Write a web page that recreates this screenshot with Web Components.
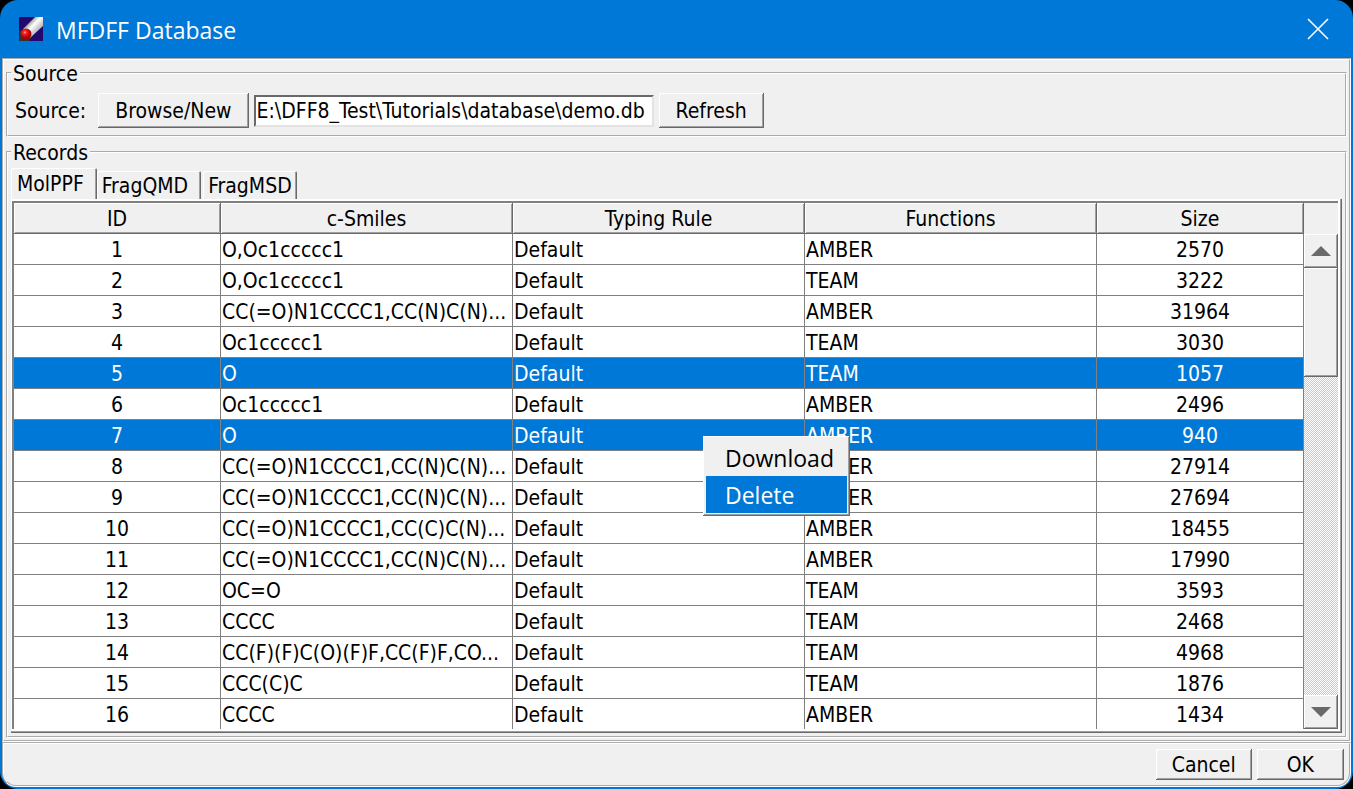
<!DOCTYPE html>
<html lang="en">
<head>
<meta charset="utf-8">
<title>MFDFF Database</title>
<style>
  body {
    margin: 0;
    background: #000;
    color: #000;
    font: 21px/26px "DejaVu Sans Condensed", "Noto Sans", sans-serif;
    --face: #f0f0f0;
    --accent: #0078d7;
    --line: #808080;
    --raised: inset -1px -1px #696969, inset 1px 1px #fff, inset -2px -2px #a0a0a0;
  }
</style>
</head>
<body>
<database-window heading="MFDFF Database">
  <group-box label="Source"><source-bar path="E:\DFF8_Test\Tutorials\database\demo.db"></source-bar></group-box>
  <group-box label="Records" class="grow">
    <tab-pane tabs="MolPPF,FragQMD,FragMSD"><records-table></records-table></tab-pane>
  </group-box>
  <bevel-button slot="footer" style="--pad: 16px">Cancel</bevel-button>
  <bevel-button slot="footer" style="--pad: 30px">OK</bevel-button>
</database-window>
<context-menu></context-menu>

<script>
class DatabaseWindow extends HTMLElement {
  constructor() {
    super();
    this.attachShadow({ mode: 'open' });
    this.shadowRoot.innerHTML = `
      <style>
        :host {
          display: flex;
          flex-direction: column;
          box-sizing: border-box;
          min-height: 100vh;
          padding: 0 2px 2px;
          background: var(--accent);
          border-radius: 18px;
          overflow: hidden;
        }
        header {
          display: flex;
          align-items: center;
          height: 58px;
          padding: 0 20px 0 17px;
          color: #fff;
        }
        h1 {
          flex: 1;
          margin: 0 0 0 13px;
          font: 23px/32px "Open Sans", sans-serif;
          padding-top: 2px;
        }
        header button {
          display: flex;
          padding: 0;
          border: 0;
          background: none;
        }
        main, footer {
          display: flex;
          border: 2px groove #fff;
          background: var(--face);
        }
        main {
          flex: 1;
          flex-direction: column;
          gap: 2px;
          padding: 0 2px 2px;
        }
        footer {
          justify-content: flex-end;
          gap: 5px;
          padding: 5px;
          border-radius: 0 0 14px 14px;
        }
      </style>
      <header>
        <svg width="24" height="24" viewBox="0 0 24 24" aria-hidden="true">
          <defs>
            <linearGradient id="rod" x1="0" y1="0" x2="1" y2="1">
              <stop offset="0.25" stop-color="#888"/>
              <stop offset="0.45" stop-color="#fff"/>
              <stop offset="0.75" stop-color="#aaa"/>
            </linearGradient>
            <radialGradient id="ball" cx="0.4" cy="0.35">
              <stop offset="0" stop-color="#fbb"/>
              <stop offset="0.3" stop-color="#f22"/>
              <stop offset="1" stop-color="#a00"/>
            </radialGradient>
          </defs>
          <path fill="#24086e" d="M0 0h24v24H0z"/>
          <path fill="#333" d="M0 14l6-2 7 7-3 5H0z"/>
          <path fill="url(#rod)" d="M4 12L16 0h8v9L11 21z"/>
          <circle cx="7" cy="17" r="5.5" fill="url(#ball)"/>
        </svg>
        <h1></h1>
        <button aria-label="Close">
          <svg width="26" height="26" viewBox="0 0 26 26">
            <path d="M3 3L23 23M23 3L3 23" stroke="#fff" stroke-width="1.6" fill="none"/>
          </svg>
        </button>
      </header>
      <main><slot></slot></main>
      <footer><slot name="footer"></slot></footer>
    `;
    this.shadowRoot.querySelector('h1').textContent = this.getAttribute('heading');
  }
}

class GroupBox extends HTMLElement {
  constructor() {
    super();
    this.attachShadow({ mode: 'open' });
    this.shadowRoot.innerHTML = `
      <style>
        :host { display: block; }
        :host(.grow) {
          display: flex;
          flex: 1;
        }
        fieldset {
          flex: 1;
          min-width: 0;
          margin: 0;
          padding: 0 3px;
          border: 2px groove #fff;
        }
        legend {
          padding: 2px 2px 0;
          line-height: 24px;
        }
      </style>
      <fieldset><legend></legend><slot></slot></fieldset>
    `;
    this.shadowRoot.querySelector('legend').textContent = this.getAttribute('label');
  }
}

class BevelButton extends HTMLElement {
  constructor() {
    super();
    this.attachShadow({ mode: 'open' });
    this.shadowRoot.innerHTML = `
      <style>
        :host { display: block; }
        button {
          display: block;
          height: var(--height, 31px);
          padding: 0 var(--pad, 17px);
          border: 0;
          background: var(--face);
          box-shadow: var(--raised);
          color: inherit;
          font: inherit;
        }
      </style>
      <button><slot></slot></button>
    `;
  }
}

class SourceBar extends HTMLElement {
  constructor() {
    super();
    this.attachShadow({ mode: 'open' });
    this.shadowRoot.innerHTML = `
      <style>
        :host {
          display: flex;
          align-items: center;
          gap: 5px;
          padding: 7px 4px;
          --height: 35px;
        }
        label { margin-right: 7px; }
        input {
          box-sizing: border-box;
          width: 400px;
          height: 32px;
          padding: 0 1px;
          border: 2px solid;
          border-color: #696969 #e3e3e3 #e3e3e3 #696969;
          background: #fff;
          color: inherit;
          font: inherit;
        }
      </style>
      <label for="path">Source:</label>
      <bevel-button>Browse/New</bevel-button>
      <input id="path" type="text">
      <bevel-button>Refresh</bevel-button>
    `;
    this.shadowRoot.querySelector('input').value = this.getAttribute('path');
  }
}

class TabPane extends HTMLElement {
  constructor() {
    super();
    this.attachShadow({ mode: 'open' });
    this.shadowRoot.innerHTML = `
      <style>
        :host {
          display: block;
          padding: 3px 0 2px;
        }
        nav {
          display: flex;
          align-items: flex-end;
          gap: 2px;
        }
        button {
          height: 28px;
          padding: 2px 5px 0;
          border: 0;
          border-radius: 2px 2px 0 0;
          background: var(--face);
          box-shadow: inset 1px 1px #fff, inset -1px 0 #696969, inset -2px 0 #a0a0a0;
          color: inherit;
          font: inherit;
        }
        button:not(:last-child) { padding-right: 13px; }
        button[aria-selected="true"] {
          height: 31px;
          padding: 0 13px 0 6px;
          margin-right: -2px;
        }
        .pane {
          padding: 2px 4px 4px 1px;
          background: #fff;
          box-shadow: inset -1px -1px #696969, inset -2px -2px #a0a0a0;
        }
        .well {
          border: solid #808080;
          border-width: 2px 0 0 2px;
        }
      </style>
      <nav role="tablist"></nav>
      <div class="pane"><div class="well"><slot></slot></div></div>
    `;
    const nav = this.shadowRoot.querySelector('nav');
    this.getAttribute('tabs').split(',').forEach((name, i) => {
      const tab = document.createElement('button');
      tab.setAttribute('role', 'tab');
      tab.setAttribute('aria-selected', i === 0);
      tab.textContent = name;
      nav.append(tab);
    });
  }
}

const RECORDS = [
  ['O,Oc1ccccc1', 'AMBER', 2570],
  ['O,Oc1ccccc1', 'TEAM', 3222],
  ['CC(=O)N1CCCC1,CC(N)C(N)...', 'AMBER', 31964],
  ['Oc1ccccc1', 'TEAM', 3030],
  ['O', 'TEAM', 1057],
  ['Oc1ccccc1', 'AMBER', 2496],
  ['O', 'AMBER', 940],
  ['CC(=O)N1CCCC1,CC(N)C(N)...', 'AMBER', 27914],
  ['CC(=O)N1CCCC1,CC(N)C(N)...', 'AMBER', 27694],
  ['CC(=O)N1CCCC1,CC(C)C(N)...', 'AMBER', 18455],
  ['CC(=O)N1CCCC1,CC(N)C(N)...', 'AMBER', 17990],
  ['OC=O', 'TEAM', 3593],
  ['CCCC', 'TEAM', 2468],
  ['CC(F)(F)C(O)(F)F,CC(F)F,CO...', 'TEAM', 4968],
  ['CCC(C)C', 'TEAM', 1876],
  ['CCCC', 'AMBER', 1434]
];
const SELECTED = [5, 7];

class RecordsTable extends HTMLElement {
  constructor() {
    super();
    this.attachShadow({ mode: 'open' });
    const rows = RECORDS.map(([smiles, functions, size], i) => `
      <tr${SELECTED.includes(i + 1) ? ' class="selected"' : ''}>
        <td>${i + 1}</td><td>${smiles}</td><td>Default</td><td>${functions}</td><td>${size}</td>
      </tr>`).join('');
    this.shadowRoot.innerHTML = `
      <style>
        :host { display: flex; }
        table {
          flex: 1;
          width: 0;
          table-layout: fixed;
          border-spacing: 0;
          background: #fff;
        }
        th, td {
          box-sizing: border-box;
          height: 31px;
          padding: 2px 1px 0;
          border: 1px solid var(--line);
          border-width: 0 1px 1px 0;
          font-weight: normal;
          line-height: 28px;
          text-align: left;
          white-space: nowrap;
          overflow: hidden;
        }
        th {
          background: var(--face);
          box-shadow: inset 1px 1px #fff, inset -1px -1px #a0a0a0;
          border-color: #696969;
          text-align: center;
        }
        th:first-child, th:last-child { width: 207px; }
        td:first-child, td:last-child { text-align: center; }
        tbody tr:last-child td {
          height: 30px;
          border-bottom: 0;
        }
        .selected {
          background: var(--accent);
          color: #fff;
        }
      </style>
      <table>
        <thead><tr><th>ID</th><th>c-Smiles</th><th>Typing Rule</th><th>Functions</th><th>Size</th></tr></thead>
        <tbody>${rows}</tbody>
      </table>
      <scroll-strip></scroll-strip>
    `;
  }
}

class ScrollStrip extends HTMLElement {
  constructor() {
    super();
    this.attachShadow({ mode: 'open' });
    this.shadowRoot.innerHTML = `
      <style>
        :host {
          display: flex;
          flex-direction: column;
          width: 34px;
          border-top: 31px solid var(--face);
          background: repeating-conic-gradient(#c8c8c8 0 25%, #fff 0 50%) 0 0 / 2px 2px;
        }
        button, .thumb {
          background: var(--face);
          box-shadow: var(--raised);
        }
        button {
          display: flex;
          align-items: center;
          justify-content: center;
          height: 34px;
          padding: 0;
          border: 0;
        }
        .thumb { height: 109px; }
        .down { margin-top: auto; }
      </style>
      <button aria-label="Scroll up"><svg width="20" height="10"><path d="M0 10L10 0L20 10z" fill="#696969"/></svg></button>
      <div class="thumb"></div>
      <button class="down" aria-label="Scroll down"><svg width="20" height="10"><path d="M0 0L10 10L20 0z" fill="#696969"/></svg></button>
    `;
  }
}

class ContextMenu extends HTMLElement {
  constructor() {
    super();
    this.attachShadow({ mode: 'open' });
    this.shadowRoot.innerHTML = `
      <style>
        :host {
          position: absolute;
          left: 703px;
          top: 436px;
          display: block;
          box-sizing: border-box;
          width: 147px;
          padding: 3px;
          background: var(--face);
          box-shadow: var(--raised);
        }
        button {
          display: block;
          width: 100%;
          height: 37px;
          padding: 2px 0 0 19px;
          border: 0;
          background: none;
          color: #000;
          font: 23px/35px "Open Sans", sans-serif;
          text-align: left;
        }
        button.active {
          background: var(--accent);
          color: #fff;
        }
      </style>
      <div role="menu">
        <button role="menuitem">Download</button>
        <button role="menuitem" class="active">Delete</button>
      </div>
    `;
  }
}

customElements.define('bevel-button', BevelButton);
customElements.define('scroll-strip', ScrollStrip);
customElements.define('source-bar', SourceBar);
customElements.define('records-table', RecordsTable);
customElements.define('tab-pane', TabPane);
customElements.define('group-box', GroupBox);
customElements.define('database-window', DatabaseWindow);
customElements.define('context-menu', ContextMenu);
</script>
</body>
</html>
